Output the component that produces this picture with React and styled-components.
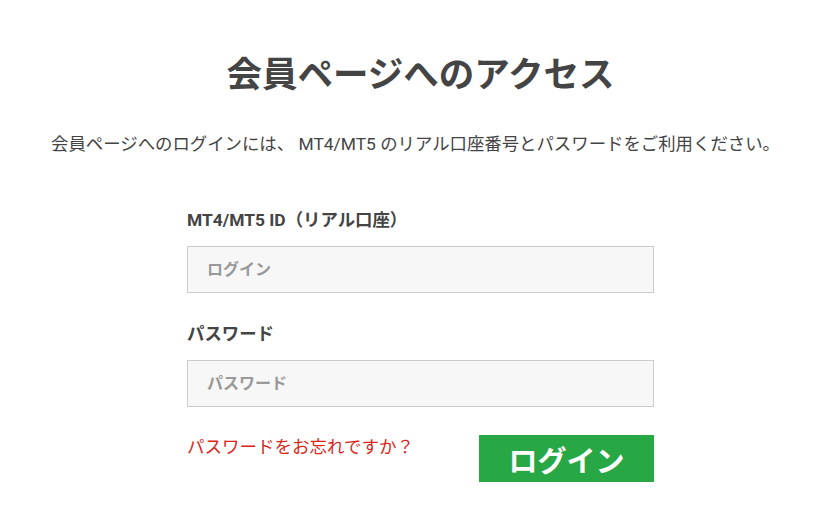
import styled, { createGlobalStyle } from 'styled-components';

const GlobalStyle = createGlobalStyle`
  body {
    margin: 0;
    background: #fff;
    font-family: Roboto, "Noto Sans CJK JP", sans-serif;
    color: #444;
  }
`;

const Page = styled.main`
  width: 831px;
  padding: 54px 0 0 10px;
  box-sizing: border-box;
  text-align: center;
`;

const Title = styled.h1`
  margin: 0;
  font-size: 35.5px;
  line-height: 42px;
  font-weight: 700;
  color: #444;
`;

const Lead = styled.p`
  margin: 36px 0 0 -10px;
  font-size: 17.4px;
  line-height: 24px;
  color: #444;
`;

const Form = styled.form`
  width: 467px;
  margin: 52px auto 0;
  text-align: left;
  display: flex;
  flex-direction: column;
`;

const Label = styled.label`
  font-size: 17.4px;
  line-height: 24px;
  font-weight: 700;
  color: #444;
  margin-top: ${({ $first }) => ($first ? '0' : '29px')};
`;

const Input = styled.input`
  margin-top: 14px;
  height: 47px;
  box-sizing: border-box;
  border: 1px solid #ccc;
  background: #f7f7f7;
  padding: 0 19px;
  font-family: inherit;
  font-size: 16px;
  font-weight: 700;
  color: #444;
  outline: none;

  &::placeholder {
    color: #999;
  }
`;

const Actions = styled.div`
  display: flex;
  justify-content: space-between;
  align-items: flex-start;
  margin-top: 28px;
`;

const Forgot = styled.a`
  color: #d9261c;
  font-size: 17.5px;
  line-height: 24px;
  text-decoration: none;
`;

const Submit = styled.button`
  width: 175px;
  height: 47px;
  border: none;
  background: #28a745;
  color: #fff;
  font-family: inherit;
  font-size: 29px;
  font-weight: 700;
  cursor: pointer;
  padding: 0;
`;

export default function App() {
  return (
    <>
      <GlobalStyle />
      <Page>
        <Title>会員ページへのアクセス</Title>
        <Lead>
          会員ページへのログインには、 MT4/MT5 のリアル口座番号とパスワードをご利用ください。
        </Lead>
        <Form onSubmit={e => e.preventDefault()}>
          <Label $first htmlFor="login">MT4/MT5 ID（リアル口座）</Label>
          <Input id="login" type="text" placeholder="ログイン" />
          <Label htmlFor="password">パスワード</Label>
          <Input id="password" type="password" placeholder="パスワード" />
          <Actions>
            <Forgot href="#">パスワードをお忘れですか？</Forgot>
            <Submit type="submit">ログイン</Submit>
          </Actions>
        </Form>
      </Page>
    </>
  );
}
